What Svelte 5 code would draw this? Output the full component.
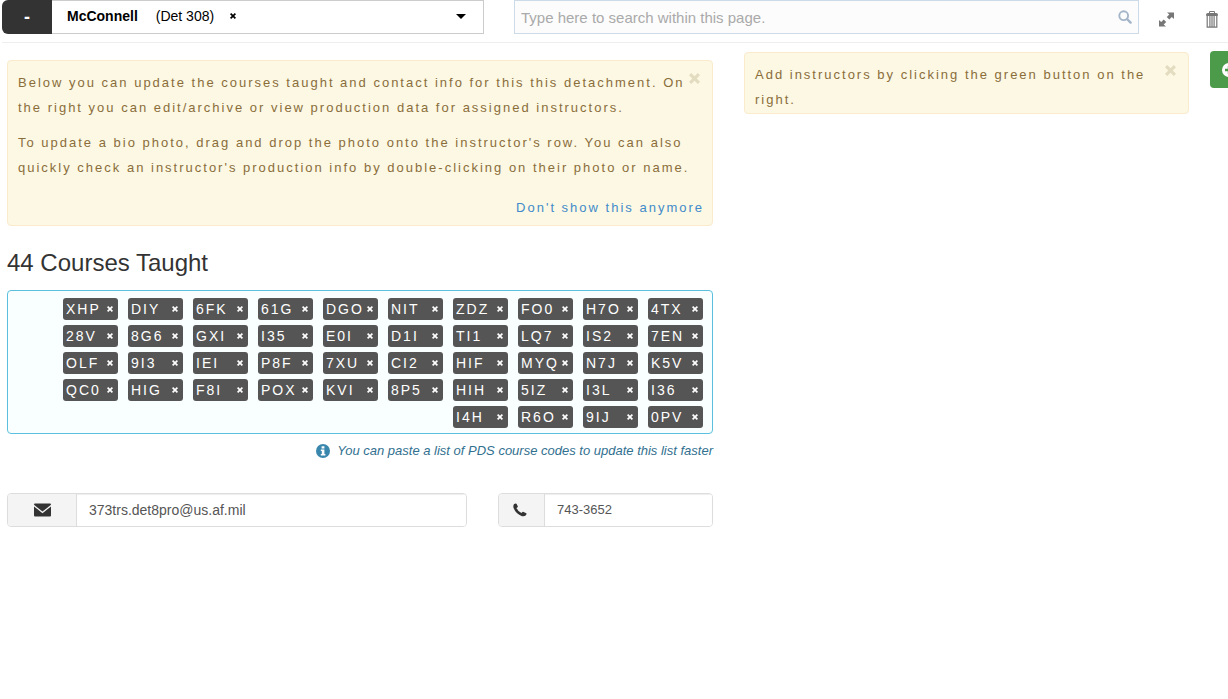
<script>
  let courses = $state(
    ('XHP DIY 6FK 61G DGO NIT ZDZ FO0 H7O 4TX ' +
      '28V 8G6 GXI I35 E0I D1I TI1 LQ7 IS2 7EN ' +
      'OLF 9I3 IEI P8F 7XU CI2 HIF MYQ N7J K5V ' +
      'QC0 HIG F8I POX KVI 8P5 HIH 5IZ I3L I36 ' +
      'I4H R6O 9IJ 0PV').split(' ')
  );
  let showTips = $state(true);
  let showAddTip = $state(true);
  let query = $state('');
  let email = $state('373trs.det8pro@us.af.mil');
  let phone = $state('743-3652');

  function remove(code) {
    courses = courses.filter((c) => c !== code);
  }
</script>

{#snippet cross()}
  <svg viewBox="0 0 10 10" aria-hidden="true">
    <path d="M2 0 L5 3 L8 0 L10 2 L7 5 L10 8 L8 10 L5 7 L2 10 L0 8 L3 5 L0 2 Z" fill="currentColor" />
  </svg>
{/snippet}

<header class="toolbar">
  <div class="picker">
    <button class="collapse" aria-label="Collapse">-</button>
    <div class="detachment">
      <select aria-label="Detachment">
        <option>McConnell (Det 308)</option>
      </select>
      <strong>McConnell</strong>
      <span>(Det 308)</span>
      <button class="clear" aria-label="Clear detachment">{@render cross()}</button>
      <svg class="caret" viewBox="0 0 10 5" aria-hidden="true"><path d="M0 0H10L5 5Z" /></svg>
    </div>
  </div>

  <div class="search">
    <input type="text" aria-label="Search" placeholder="Type here to search within this page." bind:value={query} />
    <svg viewBox="0 0 14 14" aria-hidden="true">
      <circle cx="5.7" cy="5.7" r="4.4" fill="none" stroke="currentColor" stroke-width="1.9" />
      <path d="M9 9L12.6 12.6" stroke="currentColor" stroke-width="2.4" stroke-linecap="round" />
    </svg>
  </div>

  <div class="tools">
    <button aria-label="Expand">
      <svg width="15" height="15" viewBox="0 0 15 15" aria-hidden="true">
        <path d="M8 0.5H15V7L12.8 4.9L10.3 7.4L7.8 4.9L10.3 2.5ZM7 14.5H0V8L2.2 10.1L4.7 7.6L7.2 10.1L4.7 12.5Z" fill="currentColor" />
      </svg>
    </button>
    <button aria-label="Delete">
      <svg width="12" height="17" viewBox="0 0 12 17" aria-hidden="true" fill="none" stroke="currentColor">
        <path d="M3.5 2.5V0.5H8.5V2.5" />
        <path d="M0.5 4.5V3.5Q0.5 2.5 1.5 2.5H10.5Q11.5 2.5 11.5 3.5V4.5Z" fill="currentColor" />
        <path d="M1.2 5V16.2H10.8V5M3.9 5V16M6 5V16M8.1 5V16" stroke-width="1.2" />
      </svg>
    </button>
  </div>
</header>

<main>
  <section class="info">
    {#if showTips}
      <div class="alert tips">
        <button class="close" aria-label="Close" onclick={() => (showTips = false)}>{@render cross()}</button>
        <p>Below you can update the courses taught and contact info for this this detachment. On the right you can edit/archive or view production data for assigned instructors.</p>
        <p>To update a bio photo, drag and drop the photo onto the instructor's row. You can also quickly check an instructor's production info by double-clicking on their photo or name.</p>
        <a href="#hide">Don't show this anymore</a>
      </div>
    {/if}

    <h1>{courses.length} Courses Taught</h1>

    <ul class="courses">
      {#each courses as code (code)}
        <li>
          {code}
          <button aria-label="Remove {code}" onclick={() => remove(code)}>{@render cross()}</button>
        </li>
      {/each}
    </ul>

    <p class="hint">
      <svg width="14" height="14" viewBox="0 0 14 14" aria-hidden="true">
        <circle cx="7" cy="7" r="7" fill="#3a87ad" />
        <path d="M5.6 2.2H8.4V4.4H5.6ZM4.8 5.6H8.4V9.9H9.4V11.4H4.8V9.9H5.8V7.1H4.8Z" fill="#fff" />
      </svg>
      You can paste a list of PDS course codes to update this list faster
    </p>

    <div class="contact">
      <div class="field email">
        <label for="email" aria-label="Email">
          <svg width="17" height="14" viewBox="0 0 17 14" aria-hidden="true" fill="#333">
            <path d="M1 0.5H16Q17 0.5 17 1.8L8.5 8.6L0 1.8Q0 0.5 1 0.5Z" />
            <path d="M0 3.4L8.5 10.2L17 3.4V12.3Q17 13.5 16 13.5H1Q0 13.5 0 12.3Z" />
          </svg>
        </label>
        <input id="email" type="text" bind:value={email} />
      </div>
      <div class="field phone">
        <label for="phone" aria-label="Phone">
          <svg width="14" height="14" viewBox="0 0 14 14" aria-hidden="true">
            <path d="M1.2 1Q2.6 0 3.5 0.7L4.9 3.5Q4.9 4.2 3.5 5.1Q4.8 8.4 8.5 10Q9.5 8.8 10.1 8.7L13.3 10.2Q13.8 11 12.9 12.3Q11 13.8 8.5 12.9Q2.8 10.8 0.6 5.1Q-0.2 2.6 1.2 1Z" fill="#333" />
          </svg>
        </label>
        <input id="phone" type="text" bind:value={phone} />
      </div>
    </div>
  </section>

  <section class="instructors">
    {#if showAddTip}
      <div class="alert add-tip">
        <button class="close" aria-label="Close" onclick={() => (showAddTip = false)}>{@render cross()}</button>
        <p>Add instructors by clicking the green button on the right.</p>
      </div>
    {/if}
  </section>

  <div class="actions">
    <button class="add" aria-label="Add instructor">
      <svg width="14" height="14" viewBox="0 0 14 14" aria-hidden="true">
        <circle cx="7" cy="7" r="7" fill="#fff" />
        <path d="M3 7H11M7 3V11" stroke="#4b9b4b" stroke-width="2.4" />
      </svg>
    </button>
  </div>
</main>

<style>
  :global(body) {
    margin: 0;
    background: #fff;
    color: #333;
    font: 14px/20px 'Liberation Sans', Arial, sans-serif;
  }
  :global(#app) {
    overflow: hidden;
  }
  button {
    padding: 0;
    border: 0;
    background: none;
    color: inherit;
    font: inherit;
    cursor: pointer;
  }
  input {
    box-sizing: border-box;
    min-width: 0;
    font: inherit;
  }
  svg {
    display: block;
    flex: none;
  }
  p,
  h1,
  ul {
    margin: 0;
    padding: 0;
  }

  .toolbar {
    display: grid;
    grid-template-columns: 482fr 655fr 89px;
    height: 42px;
    margin-left: 2px;
    border-bottom: 1px solid #eee;
  }
  .toolbar > * {
    height: 34px;
  }
  .picker {
    display: flex;
  }
  .collapse {
    width: 50px;
    border-radius: 6px 0 0 6px;
    background: #333;
    color: #fff;
    font-size: 18px;
    font-weight: bold;
  }
  .detachment {
    position: relative;
    display: flex;
    flex: 1;
    align-items: center;
    box-sizing: border-box;
    padding: 0 17px 2px 15px;
    border: 1px solid #ccc;
    border-left: 0;
    color: #000;
  }
  .detachment select {
    position: absolute;
    inset: 0;
    width: 100%;
    opacity: 0;
  }
  .detachment span {
    margin: 0 16px 0 18px;
  }
  .clear {
    position: relative;
    width: 6px;
  }
  .caret {
    width: 10px;
    margin-left: auto;
  }
  .search {
    display: flex;
    align-items: center;
    box-sizing: border-box;
    margin-left: 30px;
    padding-right: 6px;
    border: 1px solid #cddbe8;
    background: #fcfcfc;
    color: #a5b5c9;
  }
  .search input {
    flex: 1;
    height: 100%;
    padding: 0 6px;
    border: 0;
    background: none;
    color: #555;
    font-size: 15px;
  }
  .search input::placeholder {
    color: #aaa;
    opacity: 1;
  }
  .search svg {
    width: 14px;
  }
  .tools {
    display: flex;
    align-items: center;
    justify-content: space-between;
    box-sizing: border-box;
    padding: 4px 10px 0 20px;
    color: #777;
  }

  main {
    display: grid;
    grid-template-columns: 706fr 476fr 39px;
    padding-left: 7px;
  }
  .info {
    padding-top: 17px;
  }
  .instructors {
    padding: 9px 0 0 31px;
  }
  .actions {
    padding: 8px 0 0 21px;
  }

  .alert {
    box-sizing: border-box;
    border: 1px solid #faebcc;
    border-radius: 4px;
    background: #fcf8e3;
    color: #8a6d3b;
    line-height: 25px;
    letter-spacing: 2px;
    font-size: 13px;
  }
  .tips {
    padding: 9px 8px 5px 10px;
  }
  .tips p {
    margin-bottom: 10px;
  }
  .tips a {
    display: block;
    width: fit-content;
    margin: 15px 0 0 auto;
    color: #428bca;
    text-decoration: none;
  }
  .close {
    float: right;
    width: 11px;
    margin: 3px 4px 0 0;
    color: #e3dcc0;
  }
  .add-tip {
    padding: 9px 8px 1px 10px;
  }
  .add-tip p {
    padding-right: 30px;
  }
  .add {
    display: flex;
    align-items: center;
    width: 42px;
    height: 37px;
    padding-left: 12px;
    border-radius: 4px;
    background: #4b9b4b;
  }

  h1 {
    margin: 24px 0 14px;
    font-size: 24px;
    font-weight: normal;
    line-height: 26px;
  }
  .courses {
    display: flex;
    flex-wrap: wrap;
    justify-content: flex-end;
    gap: 5px 10px;
    padding: 7px 9px 5px;
    border: 1px solid #5bc0de;
    border-radius: 4px;
    background: #f9ffff;
    list-style: none;
  }
  .courses li {
    display: flex;
    align-items: center;
    justify-content: space-between;
    box-sizing: border-box;
    width: 55px;
    height: 22px;
    padding: 0 5px 0 3px;
    border-radius: 3px;
    background: #555;
    color: #fff;
    letter-spacing: 2px;
    white-space: nowrap;
  }
  .courses button {
    flex: none;
    width: 6px;
  }
  .hint {
    display: flex;
    align-items: center;
    justify-content: flex-end;
    gap: 7px;
    margin-top: 7px;
    color: #31708f;
    font-size: 13px;
    font-style: italic;
  }
  .contact {
    display: grid;
    grid-template-columns: 460fr 215fr;
    gap: 31px;
    margin-top: 32px;
  }
  .field {
    display: flex;
    box-sizing: border-box;
    height: 34px;
    border: 1px solid #ddd;
    border-radius: 4px;
    overflow: hidden;
  }
  .field label {
    display: flex;
    flex: none;
    align-items: center;
    justify-content: center;
    box-sizing: border-box;
    border-right: 1px solid #ddd;
    background: #f4f4f4;
  }
  .email label {
    width: 69px;
  }
  .phone label {
    width: 46px;
    padding-right: 4px;
  }
  .field input {
    flex: 1;
    padding: 0 12px;
    border: 0;
    background: #fff;
    box-shadow: inset 0 1px 1px rgba(0, 0, 0, 0.07);
    color: #555;
  }
  .phone input {
    font-size: 13px;
  }
</style>
